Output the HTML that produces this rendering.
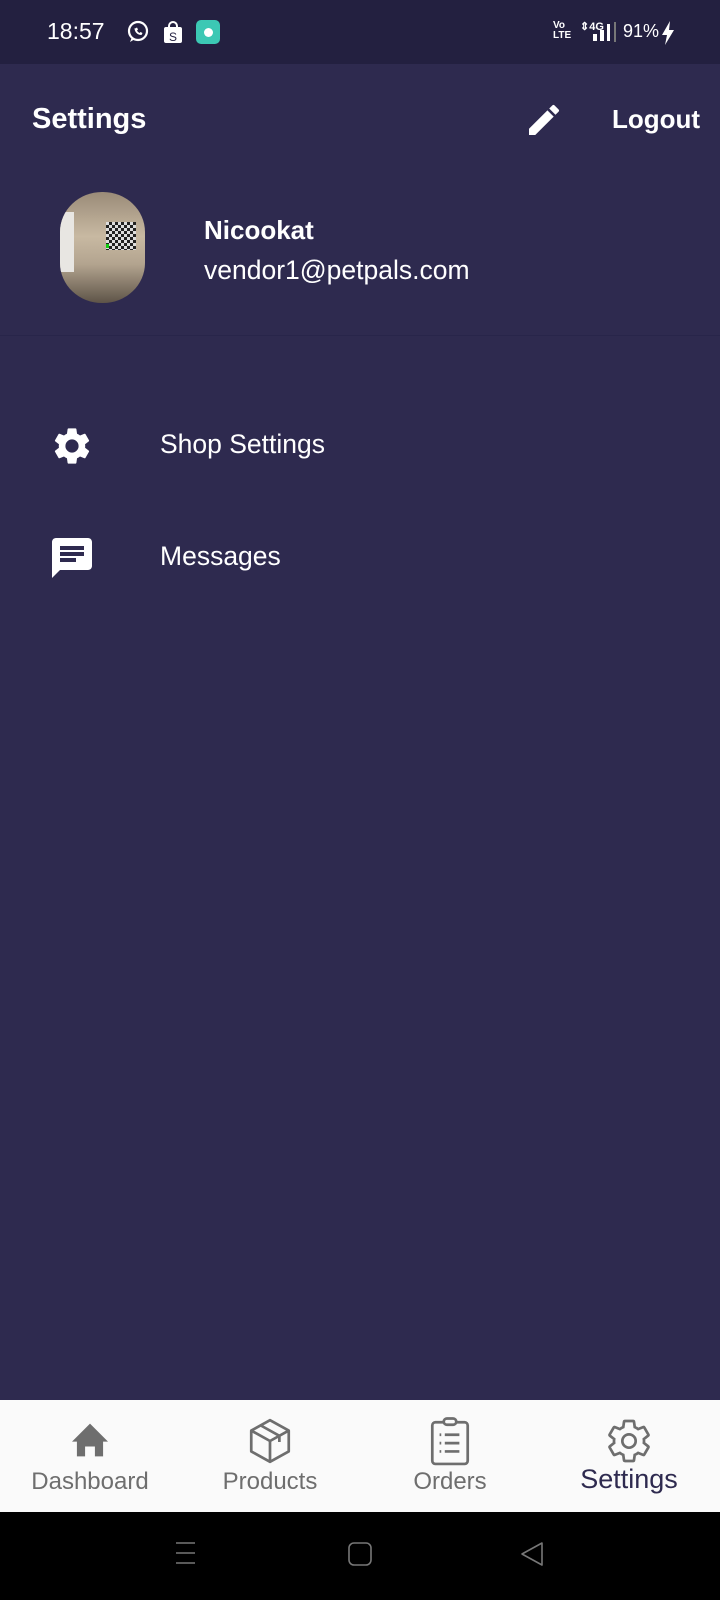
<!DOCTYPE html>
<html><head><meta charset="utf-8"><style>
*{margin:0;padding:0;box-sizing:border-box}
body{width:720px;height:1600px;background:#2e2a4f;font-family:"Liberation Sans",sans-serif;position:relative;overflow:hidden;color:#fff}
.a{position:absolute}
.sb{top:0;left:0;width:720px;height:64px;background:#232040}
.nav{top:1400px;left:0;width:720px;height:112px;background:#fafafa}
.sys{top:1512px;left:0;width:720px;height:88px;background:#000}
.lbl{font-size:24px;color:#6e6e6e;text-align:center;width:180px}
</style></head><body>
<div class="a sb"></div>
<div class="a" style="left:47px;top:18px;font-size:23px;color:#fff">18:57</div>
<svg class="a" style="left:126px;top:20px" width="24" height="24" viewBox="0 0 24 24"><circle cx="12" cy="11" r="9" fill="none" stroke="#fff" stroke-width="2.2"/><path d="M4 22l2-5 3 2z" fill="#fff"/><path d="M8.5 8c0 4 3 7 7 7l1-2-2-1-1 1c-1-.5-2-1.5-2.5-2.5l1-1-1-2-2 1z" fill="#fff"/></svg>
<svg class="a" style="left:163px;top:21px" width="20" height="23" viewBox="0 0 20 23"><rect x="1" y="6" width="18" height="16" rx="2" fill="#fff"/><path d="M6 7V5a4 4 0 0 1 8 0v2" fill="none" stroke="#fff" stroke-width="2"/><text x="10" y="20" font-size="12" text-anchor="middle" fill="#232040" font-family="Liberation Sans">S</text></svg>
<div class="a" style="left:196px;top:20px;width:24px;height:24px;border-radius:5px;background:#3cc8b4"></div>
<div class="a" style="left:204px;top:28px;width:9px;height:9px;border-radius:50%;background:#fff"></div>
<div class="a" style="left:553px;top:21px;font-size:10px;line-height:10px;font-weight:bold">Vo<br>LTE</div>
<div class="a" style="left:580px;top:20px;font-size:11px;font-weight:bold">⇕4G</div>
<div class="a" style="left:593px;top:34px;width:4px;height:7px;background:#fff"></div>
<div class="a" style="left:600px;top:30px;width:4px;height:11px;background:#fff"></div>
<div class="a" style="left:607px;top:24px;width:3px;height:17px;background:#fff"></div>
<div class="a" style="left:614px;top:22px;width:2px;height:20px;background:#777"></div>
<div class="a" style="left:623px;top:21px;font-size:18px">91%</div>
<svg class="a" style="left:661px;top:21px" width="14" height="24" viewBox="0 0 14 24"><path d="M9 0L1 14h5l-2 10 9-15H8z" fill="#fff"/></svg>

<div class="a" style="left:32px;top:103px;font-size:29px;font-weight:bold">Settings</div>
<svg class="a" style="left:524px;top:100px" width="40" height="40" viewBox="0 0 24 24"><path d="M3 17.25V21h3.75L17.81 9.94l-3.75-3.75L3 17.25zM20.71 7.04a1 1 0 0 0 0-1.41l-2.34-2.34a1 1 0 0 0-1.41 0l-1.83 1.83 3.75 3.75 1.83-1.83z" fill="#fff"/></svg>
<div class="a" style="left:612px;top:104px;font-size:26px;font-weight:bold">Logout</div>

<div class="a" style="left:60px;top:192px;width:85px;height:111px;border-radius:42px/40px;overflow:hidden;background:linear-gradient(180deg,#9a8b78 0%,#c8b9a2 40%,#b3a48f 65%,#5e5448 100%)">
<div class="a" style="left:0;top:20px;width:14px;height:60px;background:#e8e6e2"></div>
<div class="a" style="left:46px;top:30px;width:30px;height:28px;background:repeating-conic-gradient(#222 0 25%,#ddd 0 50%) 0 0/6px 6px"></div>
<div class="a" style="left:46px;top:52px;width:3px;height:4px;background:#1c1"></div>
</div>
<div class="a" style="left:204px;top:215px;font-size:26px;font-weight:bold">Nicookat</div>
<div class="a" style="left:204px;top:255px;font-size:26.5px">vendor1@petpals.com</div>
<div class="a" style="left:0;top:335px;width:720px;height:1px;background:#28254a"></div>

<svg class="a" style="left:50px;top:424px" width="44" height="44" viewBox="0 0 24 24"><path d="M19.14 12.94c.04-.3.06-.61.06-.94s-.02-.64-.07-.94l2.030-1.58a.49.49 0 0 0 .12-.61l-1.92-3.32a.49.49 0 0 0-.59-.22l-2.39.96c-.5-.38-1.03-.7-1.62-.94l-.36-2.54a.48.48 0 0 0-.48-.41h-3.840a.48.48 0 0 0-.47.41l-.36 2.54c-.59.24-1.13.57-1.62.94l-2.39-.96a.48.48 0 0 0-.59.22L2.74 8.87a.47.47 0 0 0 .12.61l2.03 1.58c-.05.3-.09.63-.09.94s.02.64.07.94l-2.03 1.58a.49.49 0 0 0-.12.61l1.92 3.32c.12.22.37.29.59.22l2.39-.96c.5.38 1.03.7 1.62.94l.36 2.54c.05.24.24.41.48.41h3.84c.24 0 .44-.17.47-.41l.36-2.54c.59-.24 1.13-.56 1.62-.94l2.39.96c.22.08.47 0 .59-.22l1.92-3.32a.47.47 0 0 0-.12-.61l-2.01-1.58zM12 15.6A3.6 3.6 0 1 1 12 8.4a3.6 3.6 0 0 1 0 7.2z" fill="#fff"/></svg>
<div class="a" style="left:160px;top:429px;font-size:26.5px">Shop Settings</div>
<svg class="a" style="left:48px;top:534px" width="48" height="48" viewBox="0 0 24 24"><path d="M20 2H4c-1.1 0-2 .9-2 2v18l4-4h14c1.1 0 2-.9 2-2V4c0-1.1-.9-2-2-2zM6 9h12v2H6V9zm8 5H6v-2h8v2zm4-6H6V6h12v2z" fill="#fff"/></svg>
<div class="a" style="left:160px;top:541px;font-size:26.5px">Messages</div>

<div class="a nav"></div>
<svg class="a" style="left:70px;top:1422px" width="40" height="36" viewBox="0 0 24 22"><path d="M12 1L1 12h3v9h5v-6h6v6h5v-9h3z" fill="#6e6e6e"/></svg>
<svg class="a" style="left:245px;top:1416px" width="50" height="50" viewBox="0 0 24 24" fill="none" stroke="#6e6e6e" stroke-width="1.3" stroke-linejoin="round"><path d="M12 2l9 5v10l-9 5-9-5V7z"/><path d="M3 7l9 5 9-5M12 12v10M7.5 4.5l9 5v3"/></svg>
<svg class="a" style="left:424px;top:1416px" width="52" height="50" viewBox="0 0 24 24" fill="none" stroke="#6e6e6e" stroke-width="1.3"><rect x="3.5" y="3" width="17" height="20" rx="1.5"/><rect x="9" y="1.2" width="6" height="3" rx="1.5" fill="#fafafa"/><path d="M9.5 9h7M9.5 13h7M9.5 17h7"/><path d="M7 9h.8M7 13h.8M7 17h.8"/></svg>
<svg class="a" style="left:604px;top:1416px" width="50" height="50" viewBox="0 0 24 24" fill="none" stroke="#6e6e6e" stroke-width="1.3"><path d="M19.14 12.94c.04-.3.06-.61.06-.94s-.02-.64-.07-.94l2.03-1.58a.49.49 0 0 0 .12-.61l-1.92-3.32a.49.49 0 0 0-.59-.22l-2.39.96c-.5-.38-1.03-.7-1.62-.94l-.36-2.54a.48.48 0 0 0-.48-.41h-3.84a.48.48 0 0 0-.47.41l-.36 2.54c-.59.24-1.13.57-1.62.94l-2.39-.96a.48.48 0 0 0-.59.22L2.74 8.87a.47.47 0 0 0 .12.61l2.03 1.58c-.05.3-.09.63-.09.94s.02.64.07.94l-2.03 1.58a.49.49 0 0 0-.12.61l1.92 3.32c.12.22.37.29.59.22l2.39-.96c.5.38 1.03.7 1.62.94l.36 2.54c.05.24.24.41.48.41h3.84c.24 0 .44-.17.47-.41l.36-2.54c.59-.24 1.13-.56 1.62-.94l2.39.96c.22.08.47 0 .59-.22l1.92-3.32a.47.47 0 0 0-.12-.61l-2.01-1.58z"/><circle cx="12" cy="12" r="3.2"/></svg>
<div class="a lbl" style="left:0;top:1468px">Dashboard</div>
<div class="a lbl" style="left:180px;top:1468px">Products</div>
<div class="a lbl" style="left:360px;top:1468px">Orders</div>
<div class="a lbl" style="left:539px;top:1464px;font-size:27px;color:#2e2a4f">Settings</div>

<div class="a sys"></div>
<svg class="a" style="left:170px;top:1540px" width="400" height="30" viewBox="0 0 400 30" fill="none" stroke="#777" stroke-width="1.6"><path d="M6 3h19M6 13h19M6 23h19"/><rect x="179" y="3" width="22" height="22" rx="5"/><path d="M372 3L352 14l20 11z" stroke-linejoin="round"/></svg>
</body></html>
